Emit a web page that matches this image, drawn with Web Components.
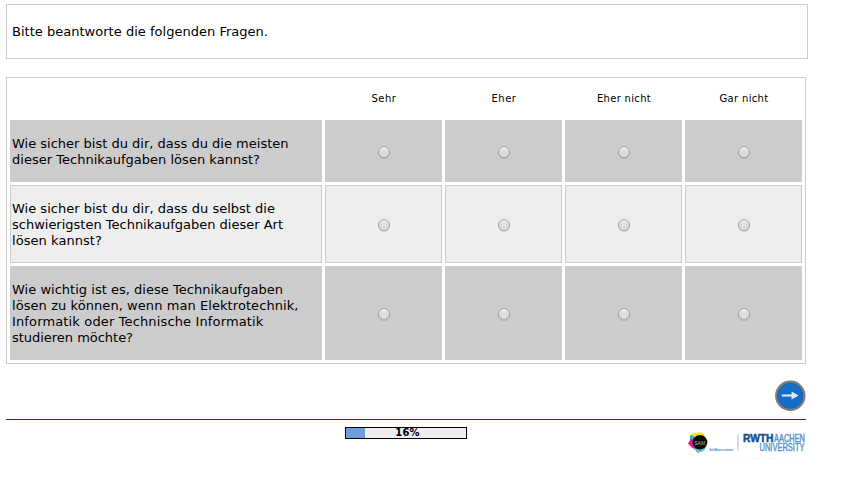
<!DOCTYPE html>
<html lang="de">
<head>
<meta charset="utf-8">
<title>Fragebogen</title>
<style>
body{margin:0;background:#fff;color:#000;font:13px/16px Verdana,"DejaVu Sans",sans-serif}
</style>
</head>
<body>
<survey-page></survey-page>
<script>
const define=(name,html)=>customElements.define(name,class extends HTMLElement{
  constructor(){super();this.attachShadow({mode:'open'}).innerHTML=html;}
});

define('intro-box',`<style>
:host{display:flex;align-items:center;box-sizing:border-box;width:802px;height:55px;border:1px solid #ccc;padding:0 5px}
</style><span><slot></slot></span>`);

// One line of text, spread to a fixed measure given by its "w" attribute.
customElements.define('fit-line',class extends HTMLElement{
  constructor(){super();this.attachShadow({mode:'open'}).innerHTML='<style>:host{display:block;white-space:nowrap}span{display:inline-block}</style><span><slot></slot></span>';}
  connectedCallback(){
    const s=this.shadowRoot.querySelector('span'),w=+this.getAttribute('w');
    const n=this.textContent.length;
    s.style.letterSpacing=((w-s.getBoundingClientRect().width)/n)+'px';
  }
});

define('radio-dot',`<style>:host{display:block;width:12px;height:12px}svg{display:block;overflow:visible}</style>
<svg width="12" height="12"><defs><linearGradient id="g" x1="0" y1="0" x2="0" y2="1"><stop offset="0" stop-color="#f0f0f0"/><stop offset=".45" stop-color="#dedede"/><stop offset="1" stop-color="#dcdcdc"/></linearGradient></defs>
<circle cx="6" cy="6.8" r="5.6" fill="none" stroke="#000" stroke-opacity=".14"/>
<circle cx="6" cy="6" r="5.5" fill="url(#g)" stroke="#a5a5a5"/></svg>`);

define('question-cell',`<style>
:host{display:flex;box-sizing:border-box;align-items:center;border:1px solid #ccc;padding:3px 1px 1px;background:var(--cell)}
:host([center]){justify-content:center;padding-left:2px}
</style><div><slot></slot></div>`);

define('column-head',`<style>
:host{display:flex;align-items:center;justify-content:center;font-size:10px;line-height:12px;padding-left:1px}
</style><slot></slot>`);

define('question-table',`<style>
:host{display:grid;box-sizing:border-box;width:800px;height:287px;margin-top:18px;border:1px solid #ccc;padding:3px;gap:3px;
grid-template-columns:312px repeat(4,117px);grid-template-rows:36px 62px 78px 94px}
.d{--cell:#ccc}.l{--cell:#eee}
</style>
<span></span><column-head><fit-line w="25">Sehr</fit-line></column-head><column-head><fit-line w="25">Eher</fit-line></column-head><column-head><fit-line w="54">Eher nicht</fit-line></column-head><column-head><fit-line w="49">Gar nicht</fit-line></column-head>
${[
 ['d',[['Wie sicher bist du dir, dass du die meisten',276.5],['dieser Technikaufgaben lösen kannst?',248]]],
 ['l',[['Wie sicher bist du dir, dass du selbst die',263],['schwierigsten Technikaufgaben dieser Art',271],['lösen kannst?',90]]],
 ['d',[['Wie wichtig ist es, diese Technikaufgaben',271],['lösen zu können, wenn man Elektrotechnik,',286.5],['Informatik oder Technische Informatik',251.5],['studieren möchte?',121]]]
].map(([c,lines])=>`<question-cell class="${c}">${lines.map(([t,w])=>`<fit-line w="${w}">${t}</fit-line>`).join('')}</question-cell>`+
 `<question-cell center class="${c}"><radio-dot></radio-dot></question-cell>`.repeat(4)).join('')}`);

define('next-button',`<style>:host{display:flex;justify-content:flex-end;width:800px;height:55px}
svg{margin-top:16px}</style>
<svg width="32" height="32"><circle cx="16.3" cy="15.7" r="14" fill="#146dc9" stroke="#7b7f84" stroke-width="2.4"/>
<circle cx="16.3" cy="15.7" r="12.6" fill="none" stroke="#285f96" stroke-width=".8"/>
<path d="M7.7 14.4H17.6V11.4L24.6 15.5 17.6 19.6V16.6H7.7z" fill="#e4edf6"/></svg>`);

define('progress-meter',`<style>
:host{display:grid;box-sizing:border-box;width:122px;height:12px;border:1px solid #000;background:linear-gradient(90deg,#6f9ddb 19px,#eee 19px);font:bold 10px/10px Verdana,"DejaVu Sans",sans-serif;justify-content:center;padding-left:3px}
</style><fit-line w="24.5">16%</fit-line>`);

define('partner-logos',`<style>:host{display:block;width:120px;height:31px}svg{display:block;overflow:visible}text{font-family:"Liberation Sans",sans-serif}</style>
<svg width="120" height="31" viewBox="686 429 120 31">
<path d="M690.3 434Q696 432 702.5 432.6L707.5 440 698 443 691 439z" fill="#f6e61c"/>
<path d="M690 435.5L693.5 435.5 696 441 690 441.5z" fill="#19b7c8"/>
<path d="M691 438.5L696 441 697 450 692 448 688 443.5z" fill="#e8198b"/>
<path d="M692 446L697 445 703 451 697.5 452.8z" fill="#ef4b93"/>
<path d="M694 448.5L700 448 706.5 447 704 450.5 697.5 452.8z" fill="#4bc5e4"/>
<path d="M703 433.5L708 441.5 706.5 447 703 446z" fill="#b4c738"/>
<circle cx="699.8" cy="442.3" r="7.3" fill="#080808"/>
<text x="694.2" y="444.5" font-size="6" textLength="11" lengthAdjust="spacingAndGlyphs" fill="#bbb">SAM</text>
<text x="709.3" y="451" font-size="4.4" font-weight="bold" textLength="23.7" lengthAdjust="spacingAndGlyphs" fill="#4d7dbb">SelfAssessment</text>
<path d="M738 434.5V450.5" stroke="#9dbedf"/>
<text x="743" y="442" font-size="10.5" font-weight="bold" textLength="30.5" lengthAdjust="spacingAndGlyphs" fill="#164f96" stroke="#164f96" stroke-width=".5">RWTH</text>
<text x="774" y="442" font-size="10.5" textLength="31" lengthAdjust="spacingAndGlyphs" fill="#5a94ca" stroke="#5a94ca" stroke-width=".45">AACHEN</text>
<text x="759.5" y="451" font-size="10.5" textLength="45" lengthAdjust="spacingAndGlyphs" fill="#5a94ca" stroke="#5a94ca" stroke-width=".45">UNIVERSITY</text>
<path d="M724 458.2H800" stroke="#eef5fb" stroke-dasharray="3 5 7 4"/>
</svg>`);

define('page-footer',`<style>
:host{display:grid;box-sizing:border-box;width:800px;height:44px;border-top:1px solid #003c91;grid-template-columns:339px 1fr 120px;padding-top:7px}
partner-logos{margin-top:2px}
</style><span></span><progress-meter></progress-meter><partner-logos></partner-logos>`);

define('survey-page',`<style>:host{display:block;padding:4px 0 0 6px}</style>
<intro-box><fit-line w="256">Bitte beantworte die folgenden Fragen.</fit-line></intro-box>
<question-table></question-table>
<next-button></next-button>
<page-footer></page-footer>`);
</script>
</body>
</html>
